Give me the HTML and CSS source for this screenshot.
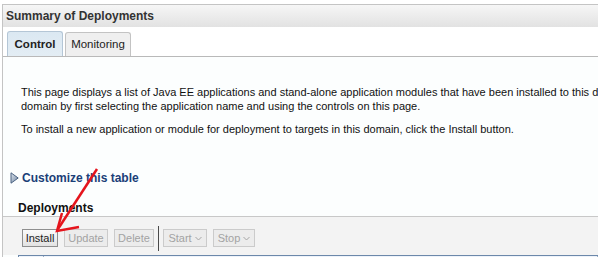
FILE: index.html
```html
<!DOCTYPE html>
<html lang="en">
<head>
  <meta charset="UTF-8" />
  <title>Summary of Deployments</title>
  <link rel="stylesheet" href="styles.css">
</head>
<body>
  <div class="page">
    <div class="header">Summary of Deployments</div>

    <div class="tabs">
      <div class="tab tab-active">Control</div>
      <div class="tab tab-monitor">Monitoring</div>
    </div>

    <div class="content">
      <p class="intro">This page displays a list of Java EE applications and stand-alone application modules that have been installed to this domain.<br>domain by first selecting the application name and using the controls on this page.</p>
      <p class="intro">To install a new application or module for deployment to targets in this domain, click the Install button.</p>

      <div class="customize">
        <svg class="twisty" width="9" height="12" viewBox="0 0 9 12">
          <defs>
            <linearGradient id="tw" x1="0" y1="0" x2="1" y2="1">
              <stop offset="0" stop-color="#dfe6ee"/>
              <stop offset="1" stop-color="#6d84a0"/>
            </linearGradient>
          </defs>
          <path d="M1 0.8 L8.2 6 L1 11.2 Z" fill="url(#tw)" stroke="#4b6382" stroke-width="1"/>
        </svg>
        <a href="#" class="customize-link">Customize this table</a>
      </div>

      <div class="section-title">Deployments</div>

      <div class="toolbar">
        <button class="btn btn-install">Install</button>
        <button class="btn btn-update" disabled>Update</button>
        <button class="btn btn-delete" disabled>Delete</button>
        <span class="sep"></span>
        <button class="btn btn-start" disabled>Start <svg class="caret" width="7" height="5" viewBox="0 0 7 5"><path d="M0.5 1 L3.5 4 L6.5 1" fill="none" stroke="#a5a5a5" stroke-width="1"/></svg></button>
        <button class="btn btn-stop" disabled>Stop <svg class="caret" width="7" height="5" viewBox="0 0 7 5"><path d="M0.5 1 L3.5 4 L6.5 1" fill="none" stroke="#a5a5a5" stroke-width="1"/></svg></button>
      </div>

      <div class="table-head">
        <span class="cell cell-check"></span>
        <span class="cell cell-name"></span>
      </div>
    </div>
  </div>

  <!-- red pointer drawn over the screenshot -->
  <svg class="pointer" width="598" height="257" viewBox="0 0 598 257">
    <line x1="97" y1="169" x2="58" y2="229" stroke="#e5141c" stroke-width="2.5"/>
    <polyline points="62,213 57,231 79,227" fill="none" stroke="#e5141c" stroke-width="2.5"/>
  </svg>
</body>
</html>
```

FILE: styles.css
```css
* {
  box-sizing: border-box;
}

html, body {
  margin: 0;
  padding: 0;
  width: 598px;
  height: 257px;
  overflow: hidden;
  background: #ffffff;
  font-family: "Liberation Sans", Arial, sans-serif;
  color: #222;
}

.page {
  margin: 4px 0 0 2px;
  border-top: 1px solid #c4c4c4;
  border-left: 1px solid #c4c4c4;
}

.header {
  height: 22px;
  padding-left: 3px;
  line-height: 22px;
  font-size: 12px;
  font-weight: bold;
  color: #333;
  background: linear-gradient(#f6f6f6, #e2e2e2);
}

.tabs {
  display: flex;
  align-items: flex-end;
  gap: 2px;
  height: 30px;
  padding-left: 4px;
  border-bottom: 1px solid #b9b9b9;
}

.tab {
  height: 24px;
  line-height: 23px;
  font-size: 11.5px;
  text-align: center;
  color: #222;
  background: #efefef;
  border: 1px solid #c3c3c3;
  border-bottom: none;
  border-radius: 3px 3px 0 0;
}

.tab-active {
  width: 56px;
  height: 25px;
  line-height: 25px;
  font-weight: bold;
  background: linear-gradient(#dbe8f2, #e3edf4);
  border-color: #b4c6d6;
}

.tab-monitor {
  width: 66px;
}

.content {
  background: #fcfefe;
}

.intro {
  margin: 0 0 9px 18px;
  font-size: 11px;
  line-height: 14px;
  white-space: nowrap;
  color: #111;
}

.intro:first-child {
  padding-top: 28px;
}

.customize {
  display: flex;
  align-items: center;
  gap: 3px;
  margin: 34px 0 0 7px;
  height: 16px;
}

.customize-link {
  font-size: 12px;
  font-weight: bold;
  color: #1b3f78;
  text-decoration: none;
}

.section-title {
  margin: 14px 0 0 15px;
  height: 16px;
  line-height: 16px;
  font-size: 12px;
  font-weight: bold;
  color: #111;
}

.toolbar {
  display: flex;
  align-items: flex-start;
  gap: 6px;
  height: 39px;
  padding: 12px 0 0 19px;
  background: #f3f3f3;
  border-top: 1px solid #c8c8c8;
}

.btn {
  display: inline-flex;
  align-items: center;
  justify-content: center;
  gap: 3px;
  height: 18px;
  padding: 0;
  font-family: inherit;
  font-size: 11px;
  color: #222;
  background: linear-gradient(#fafafa, #e2e2e2);
  border: 1px solid #8e8e8e;
  border-radius: 0;
}

.btn:disabled {
  color: #a3a3a3;
  background: #ececec;
  border-color: #cbcbcb;
}

.btn-install { width: 36px; }
.btn-update { width: 44px; }
.btn-delete { width: 40px; }
.btn-start { width: 44px; }
.btn-stop { width: 42px; }

.sep {
  width: 1px;
  height: 25px;
  margin: -3px -2px 0;
  background: #4a4a4a;
}

.table-head {
  display: flex;
  height: 12px;
  margin-left: 15px;
  background: #eef3fa;
  border-top: 1px solid #6c88aa;
  border-left: 1px solid #6c88aa;
}

.cell {
  border-right: 1px solid #9aaec6;
}

.cell-check {
  width: 25px;
}

.cell-name {
  flex: 1;
}

.pointer {
  position: absolute;
  left: 0;
  top: 0;
  pointer-events: none;
}
```
